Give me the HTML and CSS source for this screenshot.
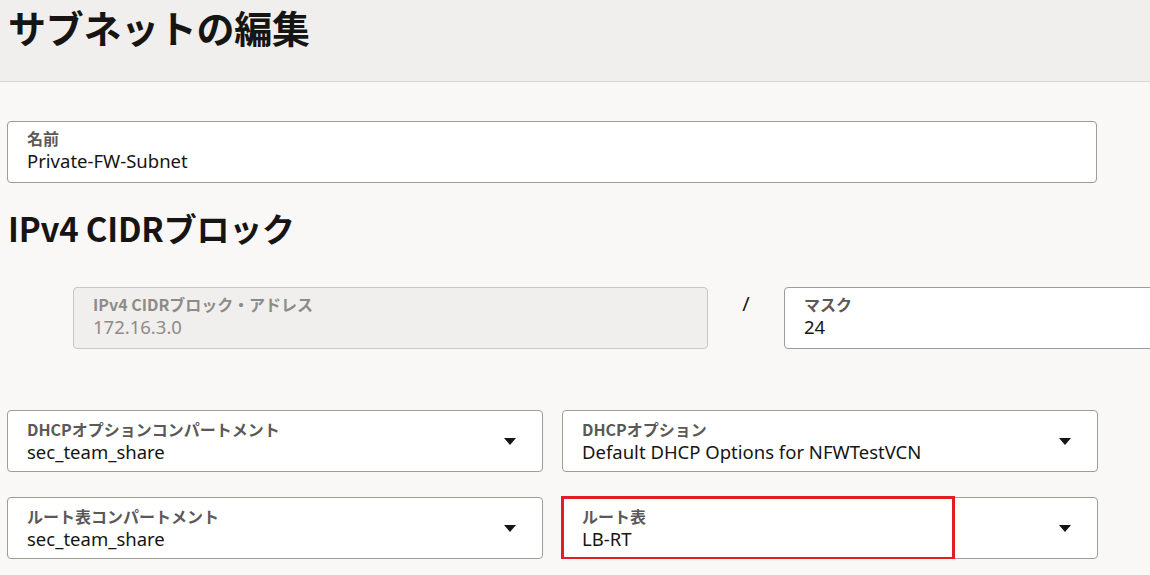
FILE: index.html
```html
<!DOCTYPE html>
<html lang="ja">
<head>
    <meta charset="UTF-8">
    <title>サブネットの編集</title>
    <link rel="stylesheet" href="styles.css">
</head>
<body>
    <header class="page-header">
        <h1>サブネットの編集</h1>
    </header>

    <main class="form">
        <div class="field wide">
            <span class="field-label">名前</span>
            <span class="field-value">Private-FW-Subnet</span>
        </div>

        <h2 class="section-title">IPv4 CIDRブロック</h2>

        <div class="cidr-row">
            <div class="field disabled cidr-address">
                <span class="field-label">IPv4 CIDRブロック・アドレス</span>
                <span class="field-value">172.16.3.0</span>
            </div>
            <span class="slash">/</span>
            <div class="field cidr-mask">
                <span class="field-label">マスク</span>
                <span class="field-value">24</span>
            </div>
        </div>

        <div class="select-grid">
            <div class="field select">
                <div class="field-text">
                    <span class="field-label">DHCPオプションコンパートメント</span>
                    <span class="field-value">sec_team_share</span>
                </div>
                <span class="caret"></span>
            </div>
            <div class="field select">
                <div class="field-text">
                    <span class="field-label">DHCPオプション</span>
                    <span class="field-value">Default DHCP Options for NFWTestVCN</span>
                </div>
                <span class="caret"></span>
            </div>
            <div class="field select">
                <div class="field-text">
                    <span class="field-label">ルート表コンパートメント</span>
                    <span class="field-value">sec_team_share</span>
                </div>
                <span class="caret"></span>
            </div>
            <div class="field select marked">
                <div class="field-text">
                    <span class="field-label">ルート表</span>
                    <span class="field-value">LB-RT</span>
                </div>
                <span class="caret"></span>
                <span class="highlight"></span>
            </div>
        </div>
    </main>
</body>
</html>
```

FILE: styles.css
```css
body {
    margin: 0;
    background-color: #f9f8f6;
    font-family: "Noto Sans", "Noto Sans CJK JP", sans-serif;
    color: #161513;
    overflow: hidden;
}

.page-header {
    height: 82px;
    box-sizing: border-box;
    background-color: #f0efed;
    border-bottom: 1px solid #d8d6d3;
    padding: 2px 8px 0;
}

.page-header h1 {
    margin: 0;
    font-family: "Noto Sans CJK JP", sans-serif;
    font-size: 38px;
    font-weight: 700;
    line-height: 50px;
    letter-spacing: -0.3px;
}

.form {
    padding: 39px 0 0 7px;
    width: 1090px;
}

.field {
    height: 62px;
    box-sizing: border-box;
    background-color: #fff;
    border: 1px solid #9e9c99;
    border-radius: 4px;
    padding: 6px 19px 0;
    display: flex;
    flex-direction: column;
}

.field-label {
    font-family: "Noto Sans CJK JP", sans-serif;
    font-size: 16px;
    font-weight: 700;
    line-height: 20px;
    color: #5b5957;
}

.field-value {
    font-size: 18.5px;
    line-height: 26px;
    color: #161513;
}

.section-title {
    margin: 23px 0 0 1px;
    font-family: "Noto Sans CJK JP", sans-serif;
    font-size: 33px;
    font-weight: 700;
    line-height: 44px;
    letter-spacing: -0.2px;
}

.cidr-row {
    display: flex;
    align-items: flex-start;
    margin-top: 37px;
    padding-left: 66px;
}

.cidr-address {
    width: 635px;
    flex-shrink: 0;
}

.field.disabled {
    background-color: #f1efed;
    border-color: #c9c7c4;
}

.field.disabled .field-label,
.field.disabled .field-value {
    color: #8d8b88;
}

.slash {
    width: 76px;
    flex-shrink: 0;
    text-align: center;
    font-size: 20px;
    line-height: 30px;
    padding-top: 2px;
}

.cidr-mask {
    width: 635px;
    flex-shrink: 0;
}

.select-grid {
    display: grid;
    grid-template-columns: 536px 536px;
    column-gap: 19px;
    row-gap: 25px;
    margin-top: 61px;
}

.field.select {
    position: relative;
    flex-direction: row;
    align-items: center;
    padding-top: 0;
    padding-right: 26px;
}

.field-text {
    flex: 1;
    display: flex;
    flex-direction: column;
    padding-top: 1px;
}

.caret {
    width: 0;
    height: 0;
    border-left: 6px solid transparent;
    border-right: 6px solid transparent;
    border-top: 7px solid #161513;
}

.highlight {
    position: absolute;
    left: -2px;
    top: -2px;
    width: 394px;
    height: 64px;
    border: 3px solid #e41c24;
    box-sizing: border-box;
}
```
